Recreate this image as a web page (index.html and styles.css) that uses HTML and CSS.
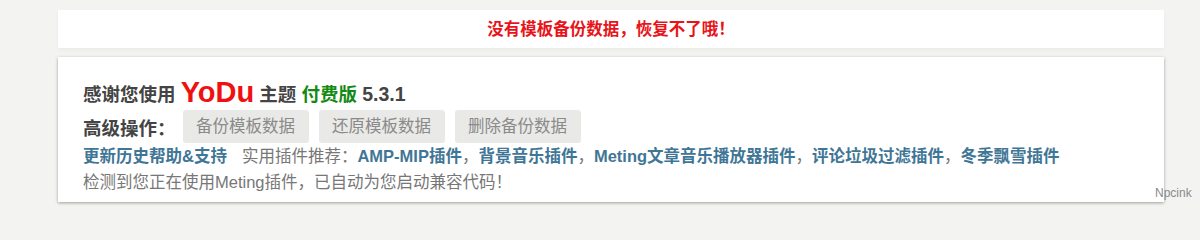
FILE: index.html
```html
<!DOCTYPE html>
<html lang="zh-CN">
<head>
<meta charset="utf-8">
<title>YoDu</title>
<link rel="stylesheet" href="styles.css">
</head>
<body>
<div class="wrap">
  <div class="notice">没有模板备份数据，恢复不了哦！</div>
  <div class="panel">
    <h2 class="title">感谢您使用 <span class="brand">YoDu</span> 主题 <span class="paid">付费版</span> <span class="ver">5.3.1</span></h2>
    <div class="ops">
      <span class="ops-label">高级操作：</span>
      <button class="btn">备份模板数据</button>
      <button class="btn">还原模板数据</button>
      <button class="btn">删除备份数据</button>
    </div>
    <p class="line"><a class="lnk help" href="#">更新历史帮助&amp;支持</a><span class="muted">实用插件推荐：</span><a class="lnk" href="#">AMP-MIP插件</a><span class="muted">，</span><a class="lnk" href="#">背景音乐插件</a><span class="muted">，</span><a class="lnk" href="#">Meting文章音乐播放器插件</a><span class="muted">，</span><a class="lnk" href="#">评论垃圾过滤插件</a><span class="muted">，</span><a class="lnk" href="#">冬季飘雪插件</a></p>
    <p class="line muted">检测到您正在使用Meting插件，已自动为您启动兼容代码！</p>
  </div>
</div>
<div class="mark">Npcink</div>
</body>
</html>
```

FILE: styles.css
```css
html, body {
  margin: 0;
  padding: 0;
}
body {
  background: #f3f3f1;
  font-family: "Liberation Sans", "Noto Sans CJK SC", sans-serif;
  width: 1200px;
  height: 210px;
  position: relative;
  overflow: hidden;
}
.wrap {
  margin-left: 58px;
  width: 1106px;
  padding-top: 10px;
}
.notice {
  background: #fff;
  height: 38px;
  line-height: 38px;
  text-align: center;
  color: #e8141a;
  font-weight: bold;
  font-size: 16.5px;
  box-shadow: 0 2px 4px rgba(0,0,0,0.04);
}
.panel {
  margin-top: 9px;
  background: #fff;
  height: 145px;
  box-sizing: border-box;
  padding: 17px 25px 0 25px;
  box-shadow: 0 1px 3px rgba(0,0,0,0.35);
}
.title {
  margin: 0;
  height: 36px;
  line-height: 36px;
  font-size: 18.5px;
  font-weight: bold;
  color: #444;
}
.brand {
  color: #f01010;
  font-size: 29px;
  vertical-align: -1px;
}
.paid {
  color: #138a13;
}
.ver {
  color: #444;
  font-size: 19.5px;
}
.ops {
  display: flex;
  align-items: center;
  height: 33px;
}
.ops-label {
  font-size: 18.5px;
  font-weight: bold;
  color: #444;
  margin-right: 7px;
}
.btn {
  height: 33px;
  padding: 0 13.5px;
  margin-right: 10px;
  border: 0;
  border-radius: 3px;
  background: #e9e9e7;
  color: #8a8a8a;
  font-family: "Liberation Sans", "Noto Sans CJK SC", sans-serif;
  font-size: 16.5px;
  line-height: 33px;
}
.line {
  margin: 0;
  height: 26px;
  line-height: 26px;
  font-size: 16.5px;
  white-space: nowrap;
}
.lnk {
  color: #3f7696;
  font-weight: bold;
  text-decoration: none;
}
.help {
  margin-right: 15px;
}
.muted {
  color: #777;
}
.mark {
  position: absolute;
  left: 1155px;
  top: 186px;
  font-size: 12px;
  color: #8a8a8a;
  font-family: "Liberation Sans", sans-serif;
}
```
